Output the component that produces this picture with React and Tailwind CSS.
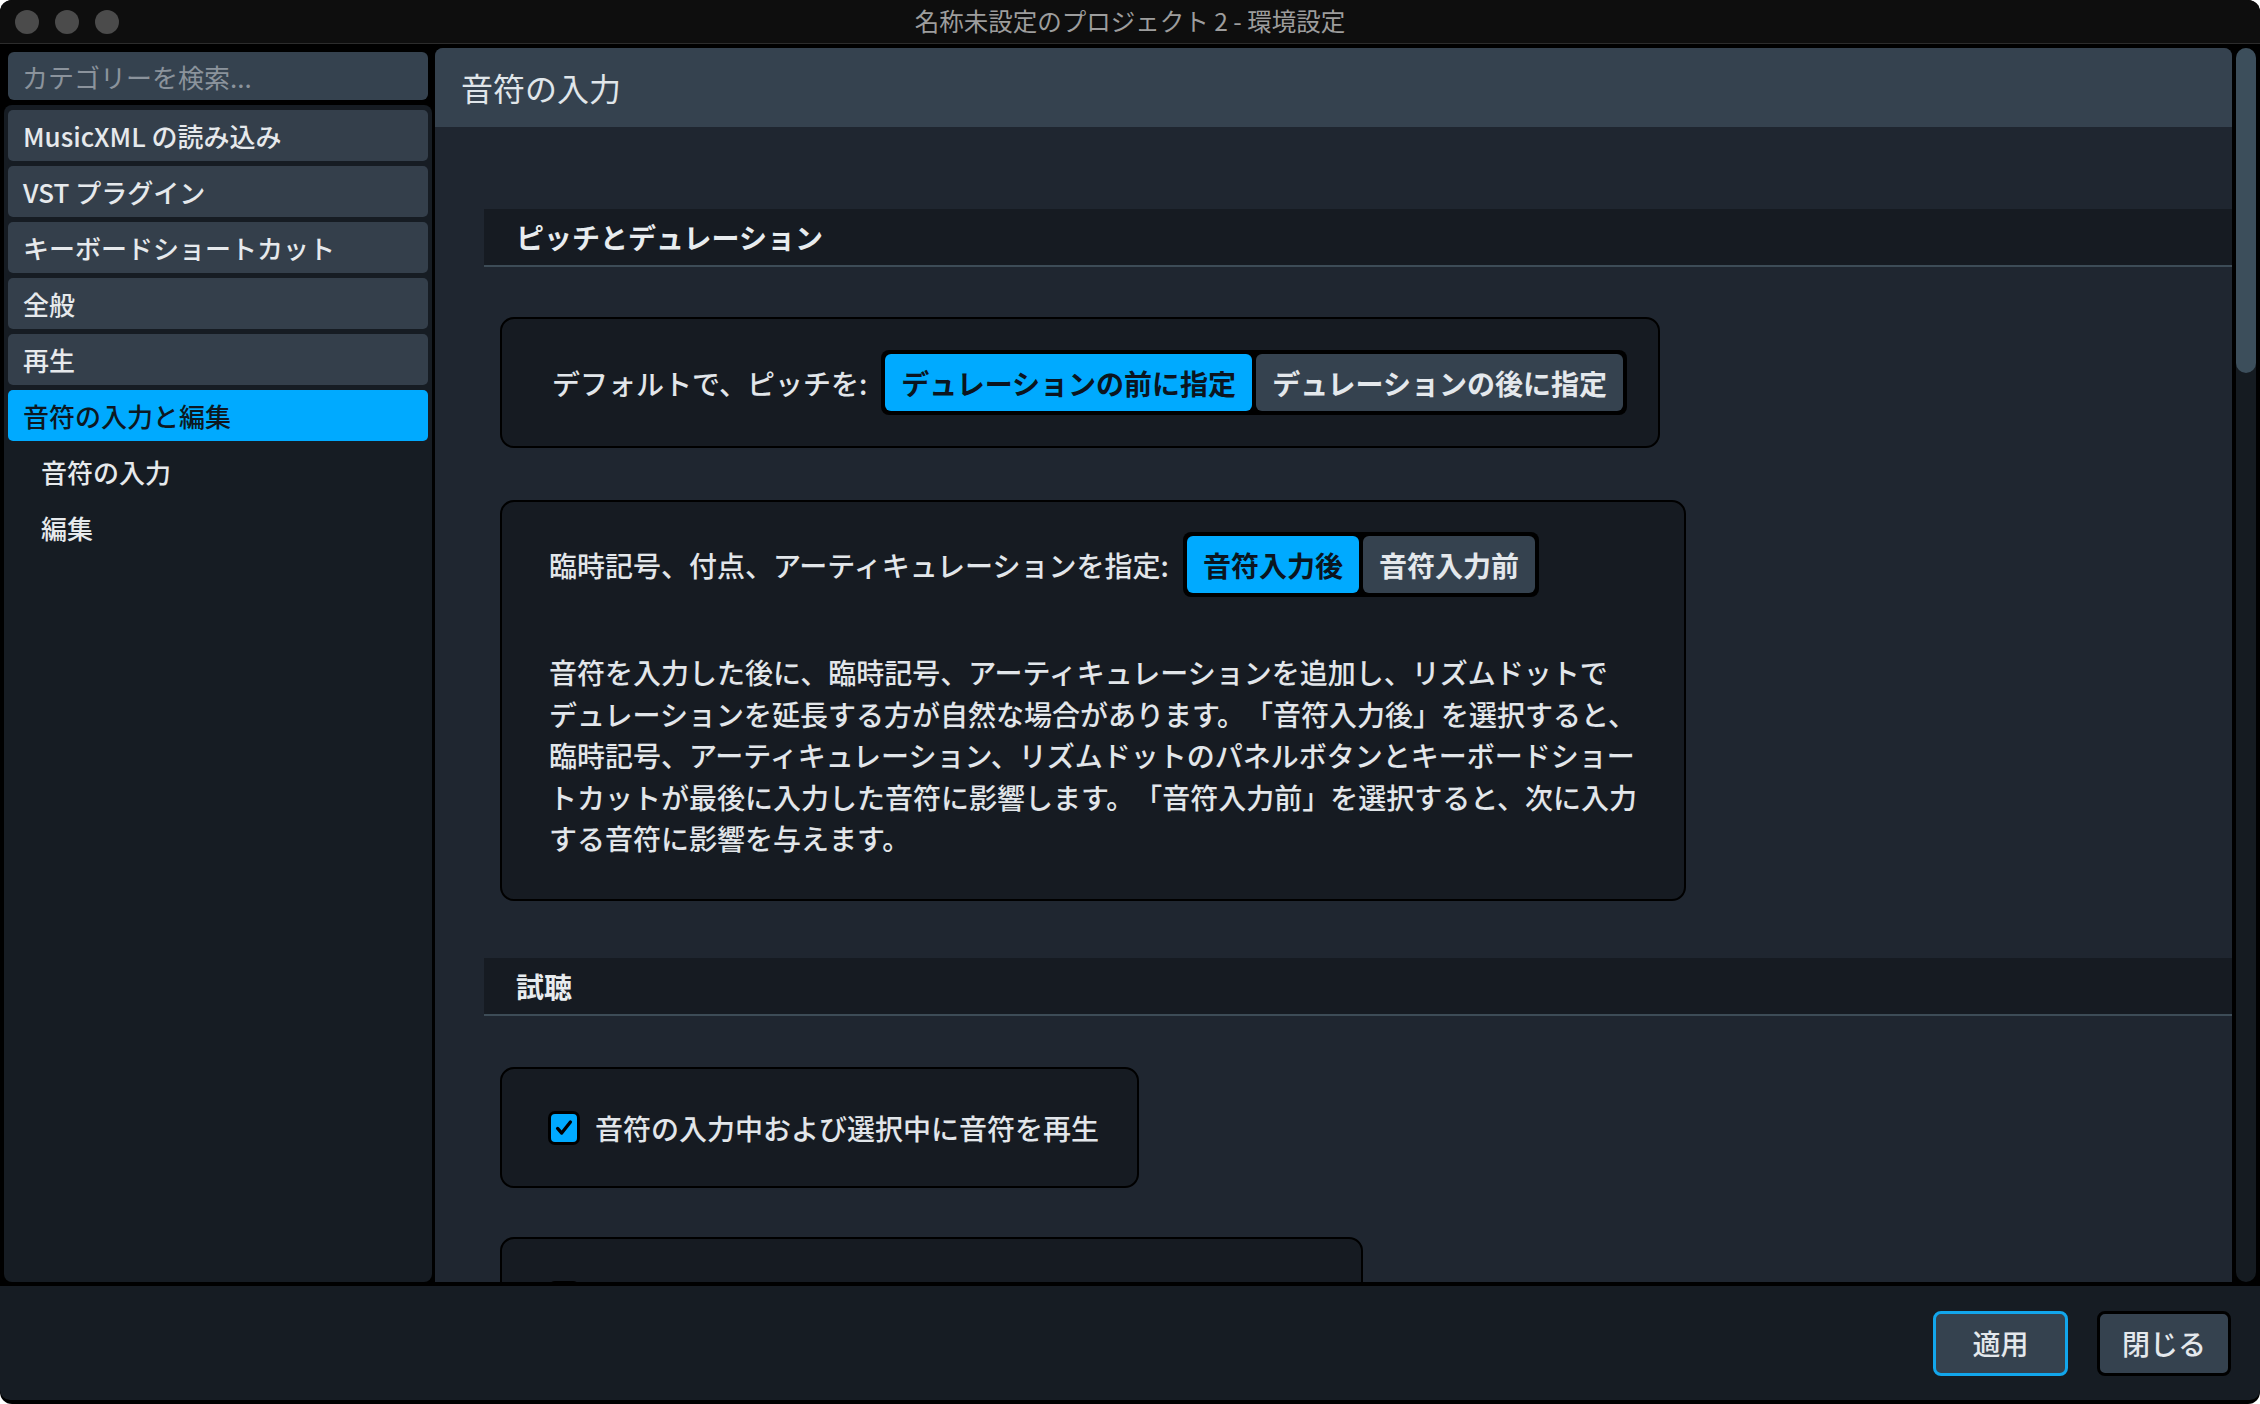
import React from 'react';

const sidebarItems = ['MusicXML の読み込み', 'VST プラグイン', 'キーボードショートカット', '全般', '再生'];

const paragraph = [
    '音符を入力した後に、臨時記号、アーティキュレーションを追加し、リズムドットで',
    'デュレーションを延長する方が自然な場合があります。「音符入力後」を選択すると、',
    '臨時記号、アーティキュレーション、リズムドットのパネルボタンとキーボードショー',
    'トカットが最後に入力した音符に影響します。「音符入力前」を選択すると、次に入力',
    'する音符に影響を与えます。',
];

const Segmented = ({ options, active }) => (
    <div className="flex gap-[4px] p-[4px] bg-black rounded-[8px]">
        {options.map((opt, i) => (
            <div
                key={opt}
                className={
                    i === active
                        ? 'h-[57px] px-[16px] flex items-center rounded-[6px] bg-[#00aaff] text-[#0b1520] font-bold whitespace-nowrap'
                        : 'h-[57px] px-[16px] flex items-center rounded-[6px] bg-[#35424f] text-[#e4e8ec] font-bold whitespace-nowrap'
                }
            >
                {opt}
            </div>
        ))}
    </div>
);

const Checkbox = ({ checked }) => (
    <div
        className={
            checked
                ? 'w-[32px] h-[34px] shrink-0 rounded-[7px] border-[3px] border-black bg-[#00aaff] flex items-center justify-center'
                : 'w-[32px] h-[34px] shrink-0 rounded-[7px] border-[3px] border-black bg-[#35424f]'
        }
    >
        {checked && (
            <svg width="22" height="22" viewBox="0 0 24 24" fill="none">
                <path d="M5 12.5l4.5 5L19 5.5" stroke="#000" strokeWidth="3.6" strokeLinecap="round" strokeLinejoin="round" />
            </svg>
        )}
    </div>
);

const SectionHeader = ({ title }) => (
    <div className="h-[58px] flex items-center pl-[32px] bg-[#161b22] border-b-2 border-[#3d4c57] text-[28px] font-bold text-[#e8ecef]">
        {title}
    </div>
);

const App = () => {
    return (
        <div className="w-[2260px] h-[1404px] bg-white font-['Noto_Sans_CJK_JP',sans-serif] [text-spacing-trim:space-all]">
            <div className="w-full h-full rounded-[12px] bg-black overflow-hidden flex flex-col">
                {/* title bar */}
                <div className="h-[44px] shrink-0 grid grid-cols-[1fr_auto_1fr] items-center bg-[#0e0e0e] border-b border-[#2c2c2c]">
                    <div className="flex gap-[16px] pl-[15px]">
                        <span className="w-[24px] h-[24px] rounded-full bg-[#4b4b4b]" />
                        <span className="w-[24px] h-[24px] rounded-full bg-[#4b4b4b]" />
                        <span className="w-[24px] h-[24px] rounded-full bg-[#4b4b4b]" />
                    </div>
                    <div className="text-[24.5px] text-[#9d9d9d] whitespace-pre">名称未設定のプロジェクト 2 - 環境設定</div>
                    <div />
                </div>

                {/* body */}
                <div className="flex-1 min-h-0 flex px-[4px] pt-[4px]">
                    {/* sidebar */}
                    <div className="w-[428px] shrink-0 flex flex-col">
                        <div className="mx-[4px] mt-[4px] h-[48px] shrink-0 flex items-center pl-[14px] rounded-[6px] bg-[#35424f] text-[26px] text-[#8b939c]">
                            カテゴリーを検索...
                        </div>
                        <div className="mt-[5px] flex-1 rounded-[8px] bg-[#161c23] px-[4px] pt-[5px] flex flex-col gap-[5px]">
                            {sidebarItems.map((item) => (
                                <div key={item} className="h-[51px] flex items-center pl-[15px] rounded-[5px] bg-[#343f4b] text-[26px] font-medium text-[#e6e9ec]">
                                    {item}
                                </div>
                            ))}
                            <div className="h-[51px] flex items-center pl-[15px] rounded-[5px] bg-[#00aaff] text-[26px] font-medium text-[#0d1822]">
                                音符の入力と編集
                            </div>
                            <div className="h-[51px] flex items-center pl-[33px] text-[26px] font-medium text-[#e6e9ec]">音符の入力</div>
                            <div className="h-[51px] flex items-center pl-[33px] text-[26px] font-medium text-[#e6e9ec]">編集</div>
                        </div>
                    </div>

                    {/* main panel */}
                    <div className="ml-[3px] w-[1797px] shrink-0 flex flex-col rounded-t-[8px] bg-[#1f2630] overflow-hidden">
                        <div className="h-[79px] shrink-0 flex items-center pl-[26px] pb-[2px] bg-[#35424f] text-[32px] text-[#e0e6ea]">
                            音符の入力
                        </div>
                        <div className="flex-1 min-h-0 overflow-hidden pl-[49px] pt-[82px] text-[28px] text-[#e2e6ea]">
                            <SectionHeader title="ピッチとデュレーション" />

                            <div className="mt-[50px] ml-[16px] w-[1160px] h-[131px] flex items-center pl-[50px] rounded-[14px] border-2 border-black bg-[#161b22]">
                                <span className="font-medium whitespace-nowrap">デフォルトで、ピッチを:</span>
                                <div className="ml-[14px]">
                                    <Segmented options={['デュレーションの前に指定', 'デュレーションの後に指定']} active={0} />
                                </div>
                            </div>

                            <div className="mt-[52px] ml-[16px] w-[1186px] h-[401px] pl-[47px] pt-[30px] rounded-[14px] border-2 border-black bg-[#161b22]">
                                <div className="flex items-center">
                                    <span className="font-medium whitespace-nowrap">臨時記号、付点、アーティキュレーションを指定:</span>
                                    <div className="ml-[14px]">
                                        <Segmented options={['音符入力後', '音符入力前']} active={0} />
                                    </div>
                                </div>
                                <div className="mt-[55px] leading-[41.6px] font-medium">
                                    {paragraph.map((line) => (
                                        <div key={line} className="whitespace-nowrap">{line}</div>
                                    ))}
                                </div>
                            </div>

                            <div className="mt-[57px]">
                                <SectionHeader title="試聴" />
                            </div>

                            <div className="mt-[51px] ml-[16px] w-[639px] h-[121px] flex items-center gap-[15px] pl-[46px] rounded-[14px] border-2 border-black bg-[#161b22]">
                                <Checkbox checked />
                                <span className="font-medium whitespace-nowrap">音符の入力中および選択中に音符を再生</span>
                            </div>

                            <div className="mt-[49px] ml-[16px] w-[863px] h-[121px] flex items-center gap-[15px] pl-[46px] rounded-[14px] border-2 border-black bg-[#161b22]">
                                <Checkbox checked={false} />
                            </div>
                        </div>
                    </div>

                    {/* scrollbar */}
                    <div className="ml-[4px] w-[20px] shrink-0 rounded-full bg-[#151b21] flex flex-col">
                        <div className="h-[325px] rounded-full bg-[#3c4e5b]" />
                    </div>
                </div>

                {/* footer */}
                <div className="mt-[4px] h-[114px] shrink-0 mb-[4px] flex items-center justify-end gap-[29px] pr-[29px] rounded-b-[10px] bg-[#161c23]">
                    <button className="w-[135px] h-[65px] rounded-[8px] border-[3px] border-[#12a6ec] bg-[#35424f] text-[28px] font-medium text-[#e4e8ec]">
                        適用
                    </button>
                    <button className="w-[134px] h-[65px] rounded-[8px] border-[3px] border-black bg-[#35424f] text-[28px] font-medium text-[#e4e8ec]">
                        閉じる
                    </button>
                </div>
            </div>
        </div>
    );
};

export default App;
